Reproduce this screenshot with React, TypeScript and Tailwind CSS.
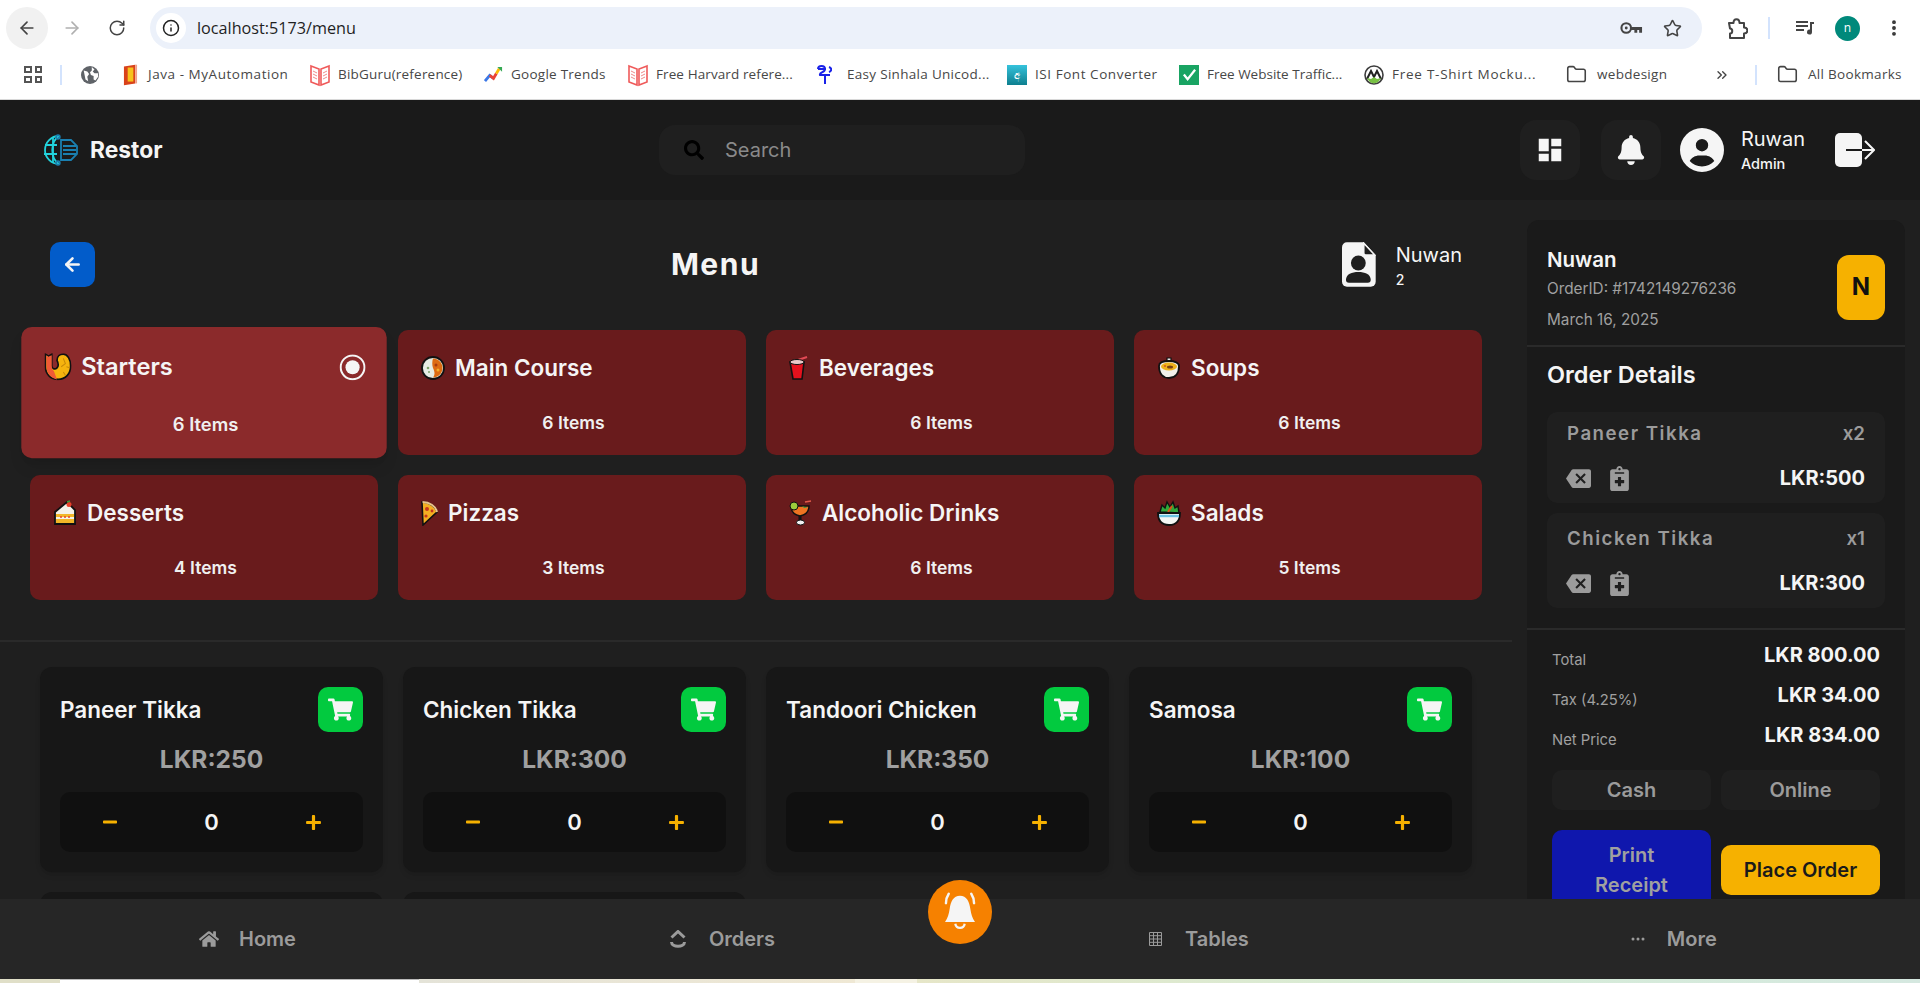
import React from "react";
import { ArrowLeft, ArrowRight, RotateCw, Info, Star, EllipsisVertical, Folder, ChevronsRight } from "lucide-react";
import { FaBell, FaSearch, FaShoppingCart, FaHome, FaMinus, FaPlus, FaNotesMedical } from "react-icons/fa";
import { FaCircleUser } from "react-icons/fa6";
import { MdDashboard, MdBackspace } from "react-icons/md";
import { BsThreeDots } from "react-icons/bs";

const Book = () => (
  <svg viewBox="0 0 20 24" className="w-[20px] h-[24px]">
    <path d="M1 3l8 3v16l-8-3zM19 3l-8 3v16l8-3z" fill="#fff" stroke="#ef5a5a" strokeWidth="1.6" />
    <path d="M3 8l4 2M3 11l4 2M3 14l4 2M17 8l-4 2M17 11l-4 2M17 14l-4 2" stroke="#ef8a8a" strokeWidth="1" />
  </svg>
);
const Bookmarks: { label: string; w: string; icon: React.ReactNode; gap: string }[] = [
  { label: "Java - MyAutomation", w: "w-[140px] tracking-[0.55px]", gap: "gap-[10px]", icon: <svg viewBox="0 0 16 24" className="w-[15px] h-[24px]"><path d="M1 3l12-2v20l-12 2z" fill="#d9421a" /><rect x="5" y="4" width="6" height="15" fill="#f6c21c" /><path d="M13 1h2v20h-2z" fill="#f0a08a" /></svg> },
  { label: "BibGuru(reference)", w: "w-[124px] tracking-[0.2px]", gap: "gap-[8px]", icon: <Book /> },
  { label: "Google Trends", w: "w-[95px] tracking-[0.25px]", gap: "gap-[8px]", icon: <svg viewBox="0 0 20 20" className="w-[19px] h-[19px]"><path d="M1 17l5-6 4 3" stroke="#3b78e7" strokeWidth="3" fill="none" /><path d="M6 11l4 3 3-5" stroke="#ea4335" strokeWidth="3" fill="none" /><path d="M13 9l3-5" stroke="#fbbc04" strokeWidth="3" fill="none" /><path d="M14 2h5v5z" fill="#34a853" /></svg> },
  { label: "Free Harvard refere...", w: "w-[138px] tracking-[0.1px]", gap: "gap-[8px]", icon: <Book /> },
  { label: "Easy Sinhala Unicod...", w: "w-[142px] tracking-[0.3px]", gap: "gap-[11px]", icon: <svg viewBox="0 0 16 22" className="w-[16px] h-[22px]"><path d="M2 5h8M2 5c0-4 7-4 7 0s-6 3-5 6h10M9 11v9M13 3c3 1 3 4 0 5" stroke="#1a22e8" strokeWidth="2" fill="none" /></svg> },
  { label: "ISI Font Converter", w: "w-[118px] tracking-[0.55px]", gap: "gap-[8px]", icon: <div className="w-[20px] h-[20px] bg-gradient-to-b from-[#35c3dc] to-[#0d7f8f] flex items-center justify-center text-[10px] text-white font-['Noto_Sans',sans-serif] leading-none">අ</div> },
  { label: "Free Website Traffic...", w: "w-[139px]", gap: "gap-[8px]", icon: <div className="w-[20px] h-[20px] bg-[#19a463] flex items-center justify-center"><svg viewBox="0 0 16 16" className="w-[15px] h-[15px]"><path d="M2 8l4 5 8-10" stroke="#fff" strokeWidth="2.4" fill="none" /></svg></div> },
  { label: "Free T-Shirt Mocku...", w: "w-[136px] tracking-[0.75px]", gap: "gap-[8px]", icon: <svg viewBox="0 0 20 20" className="w-[20px] h-[20px]"><circle cx="10" cy="10" r="9" fill="#fff" stroke="#3d3d3d" strokeWidth="1.6" /><path d="M3 14l4-8 3 6 3-6 4 8" stroke="#222" strokeWidth="2" fill="none" /><path d="M3 13c3 7 11 7 14 0l-4 1-3-2-3 2z" fill="#77c043" /></svg> },
];

const Outline = "#111";
const Emojis: Record<string, { w: string; node: React.ReactNode }> = {
  Starters: { w: "w-[24px]", node: <svg viewBox="0 0 26 26" className="w-[26px] h-[26px] shrink-0"><path d="M1 1l3 2 3-2v11c0 3 3 4 5 2s1-5 0-7c0-4 3-6 6-6 4 0 7 5 7 11 0 8-5 13-12 13S1 20 1 13z" fill="#f6b40e" stroke={Outline} strokeWidth="1.6" /><path d="M1.800 2l2.200 1.500 3-1.500v10c0 3 1 4 2 5l3 8c-6-1-10-6-10-12z" fill="#ef5a36" /><path d="M18 5l2 5-4 3M21 13l3 1M18 18l2 3" stroke="#c98a08" strokeWidth="1" fill="none" /></svg> },
  "Main Course": { w: "w-[24px]", node: <svg viewBox="0 0 24 24" className="w-[24px] h-[24px]"><circle cx="12" cy="12" r="11" fill="#e6ece4" stroke={Outline} strokeWidth="1.800" /><path d="M12 2.500c5 0 9.500 4 9.500 9.500s-4.500 9.500-9.500 9.500c2-3 2-5 0-9.500-1-3-1-6.500 0-9.500z" fill="#dd6b12" /><circle cx="15" cy="9" r="1.500" fill="#a83b0c" /><circle cx="17" cy="14" r="1.500" fill="#f2b02a" /><circle cx="7" cy="12" r="1.300" fill="#7ea36b" /><circle cx="8" cy="16" r="1" fill="#7ea36b" /></svg> },
  Beverages: { w: "w-[20px]", node: <svg viewBox="0 0 20 26" className="w-[20px] h-[26px]"><path d="M9 5L18 2" stroke="#e24a55" strokeWidth="2" /><path d="M1 7h14l-2 17H4z" fill="#e5111d" stroke={Outline} strokeWidth="1.600" /><ellipse cx="8" cy="7" rx="7" ry="2.500" fill="#e9c9c9" stroke={Outline} strokeWidth="1" /></svg> },
  Soups: { w: "w-[24px]", node: <svg viewBox="0 0 24 24" className="w-[24px] h-[24px]"><path d="M10 2h4v3h-4z" fill="#e8e8e8" stroke={Outline} strokeWidth="1.200" /><path d="M2 10c0-3 4-5 10-5s10 2 10 5c0 8-4 12-10 12S2 18 2 10z" fill="#f1f0ea" stroke={Outline} strokeWidth="1.800" /><ellipse cx="12" cy="10.500" rx="8" ry="4" fill="#eeb21c" /><ellipse cx="13" cy="11" rx="3" ry="1.500" fill="#7a4215" /><circle cx="8" cy="10" r="1" fill="#d9541a" /></svg> },
  Desserts: { w: "w-[24px]", node: <svg viewBox="0 0 24 26" className="w-[24px] h-[26px]"><path d="M2 12L14 2l8 8v14H2z" fill="#f4f1e8" stroke={Outline} strokeWidth="1.800" /><circle cx="16" cy="4.500" r="2.500" fill="#e8402a" /><path d="M14 2l3-1" stroke="#3a9a3a" strokeWidth="1.500" /><rect x="3" y="14" width="18" height="3" fill="#f2b628" /><rect x="3" y="19" width="18" height="4" fill="#f2b628" /><circle cx="8" cy="17" r="1" fill="#e8402a" /><circle cx="12" cy="17" r="1" fill="#e8402a" /><circle cx="16" cy="17" r="1" fill="#e8402a" /></svg> },
  Pizzas: { w: "w-[17px]", node: <svg viewBox="0 0 17 26" className="w-[17px] h-[26px]"><path d="M1 2c7 0 13 4 15 10L2 25z" fill="#f4ae22" stroke={Outline} strokeWidth="1.600" /><path d="M1.500 2c7 0 13 4 14.500 10" stroke="#e8c58c" strokeWidth="2" fill="none" /><circle cx="6" cy="9" r="2" fill="#c7361d" /><circle cx="11" cy="11" r="1.400" fill="#c7361d" /><circle cx="5" cy="16" r="1.600" fill="#c7361d" /></svg> },
  "Alcoholic Drinks": { w: "w-[23px]", node: <svg viewBox="0 0 23 26" className="w-[23px] h-[26px]"><path d="M2 6h18c0 6-4 9-9 10-5-1-9-4-9-10z" fill="#ee7422" stroke={Outline} strokeWidth="1.500" /><circle cx="5" cy="6" r="4" fill="#9ccc3c" stroke={Outline} strokeWidth="1" /><path d="M11 4l4 4h4l-6-2z" fill="#3c9c3c" /><path d="M11 16v6" stroke="#111" strokeWidth="3" /><ellipse cx="11.500" cy="22.500" rx="4" ry="2.500" fill="#f2f2f2" stroke={Outline} strokeWidth="1" /><path d="M16 2l6-1" stroke="#e25a4a" strokeWidth="1.500" /></svg> },
  Salads: { w: "w-[24px]", node: <svg viewBox="0 0 24 26" className="w-[24px] h-[26px]"><path d="M3 12L5 5l3 3 2-6 3 5 3-5 2 6 3-2 1 7z" fill="#2fa83a" stroke={Outline} strokeWidth="1.400" /><path d="M11 12l4-6" stroke="#d9541a" strokeWidth="2" /><path d="M1 13h22c0 7-3 12-11 12S1 20 1 13z" fill="#f4f6f4" stroke={Outline} strokeWidth="1.800" /><path d="M2 16h20" stroke="#6cc4e4" strokeWidth="2.400" /></svg> },
};

const cats = [
  { n: "Starters", c: "6 Items", active: true },
  { n: "Main Course", c: "6 Items" },
  { n: "Beverages", c: "6 Items" },
  { n: "Soups", c: "6 Items" },
  { n: "Desserts", c: "4 Items" },
  { n: "Pizzas", c: "3 Items" },
  { n: "Alcoholic Drinks", c: "6 Items" },
  { n: "Salads", c: "5 Items" },
];
const products = [
  { n: "Paneer Tikka", p: "LKR:250" },
  { n: "Chicken Tikka", p: "LKR:300" },
  { n: "Tandoori Chicken", p: "LKR:350" },
  { n: "Samosa", p: "LKR:100" },
];

function BrowserChrome() {
  return (
    <div className="bg-white h-[100px] flex flex-col border-b border-[#d8d8d8] shrink-0 text-[#3c4043] font-['Open_Sans',sans-serif]">
      <div className="h-[50px] flex items-center pt-[6px] pl-[6px]">
        <div className="w-[42px] h-[42px] rounded-full bg-[#f1f1f1] flex items-center justify-center"><ArrowLeft size={20} strokeWidth={2} color="#444" /></div>
        <div className="w-[48px] flex justify-center"><ArrowRight size={20} color="#b0b0b0" strokeWidth={2} /></div>
        <div className="w-[42px] flex justify-center"><RotateCw size={18} color="#444" strokeWidth={2} /></div>
        <div className="ml-[12px] w-[1552px] h-[42px] rounded-full bg-[#ecf1fa] flex items-center pl-[6px] pr-[20px]">
          <div className="w-[30px] h-[30px] rounded-full bg-white flex items-center justify-center"><Info size={18} color="#222" strokeWidth={2} /></div>
          <div className="ml-[11px] mt-[1px] text-[16.200px] text-[#1f1f1f]">localhost:5173/menu</div>
          <div className="ml-auto flex items-center gap-[20px]">
            <svg viewBox="0 0 24 14" className="w-[23px] h-[14px]"><circle cx="6.500" cy="7" r="5" fill="none" stroke="#444" strokeWidth="2.200" /><circle cx="6.500" cy="7" r="1.500" fill="#444" /><path d="M11 6h12v6h-3V9h-2v3h-3V9h-4z" fill="#444" /></svg>
            <Star size={19} color="#444" strokeWidth={2} />
          </div>
        </div>
        <div className="ml-[24px] flex items-center">
          <svg viewBox="0 0 22 22" className="w-[22px] h-[22px]"><path d="M3 6h4.500c0-5 6-5 6 0H18v4.500c4.500 0 4.500 6 0 6V21H4v-4.500c3 0 3-5 0-5z" fill="none" stroke="#444" strokeWidth="2" strokeLinejoin="round" /></svg>
          <div className="ml-[20px] w-[2px] h-[22px] bg-[#d3e3fd]" />
          <svg viewBox="0 0 20 16" className="ml-[25px] w-[20px] h-[16px]"><path d="M1 2h12M1 6h12M1 10h8" stroke="#444" strokeWidth="2" /><path d="M15 2h4v2h-2v8a2.500 2.500 0 1 1-2-2.400z" fill="#444" /></svg>
          <div className="ml-[20px] w-[25px] h-[25px] rounded-full bg-[#00897b] text-white text-[12px] flex items-center justify-center">n</div>
          <EllipsisVertical size={20} color="#333" strokeWidth={2.600} className="ml-[24px]" />
        </div>
      </div>
      <div className="h-[49px] flex items-center pl-[24px] text-[13.500px] text-[#474747] whitespace-nowrap">
        <div className="grid grid-cols-2 gap-[3px] w-[18px]">
          <div className="h-[7px] border-2 border-[#555]" /><div className="h-[7px] border-2 border-[#555]" /><div className="h-[7px] border-2 border-[#555]" /><div className="h-[7px] border-2 border-[#555]" />
        </div>
        <div className="ml-[18px] w-[2px] h-[20px] bg-[#d3e3fd]" />
        <svg viewBox="0 0 20 20" className="ml-[19px] w-[18px] h-[18px]"><circle cx="10" cy="10" r="10" fill="#5f6368" /><path d="M3 5l4 1 2 3-2 3 1 5-3-2-1-5zM12 1l3 3-2 2 2 2 4 0 0 4-3 4-2-1 0-4-3-1-1-3 2-2z" fill="#fff" /></svg>
        <div className="ml-[24px] flex items-center gap-[22px]">
          {Bookmarks.map((b, i) => (
            <div key={b.label} className={`flex items-center ${b.gap}`}>
              {b.icon}
              <span className={`${b.w} block ${i === 4 ? "ml-[4px] mr-[-4px]" : ""} ${i === 5 ? "mr-[4px]" : ""} ${i === 6 ? "mr-[-4px]" : ""}`}>{b.label}</span>
            </div>
          ))}
        </div>
        <Folder size={21} color="#444" strokeWidth={1.800} className="ml-[38px]" />
        <span className="ml-[10px] w-[72px] tracking-[0.3px]">webdesign</span>
        <ChevronsRight size={16} color="#444" strokeWidth={2} className="ml-[45px]" />
        <div className="ml-[25px] w-[2px] h-[20px] bg-[#d3e3fd]" />
        <Folder size={21} color="#444" strokeWidth={1.800} className="ml-[20px]" />
        <span className="ml-[10px] tracking-[0.3px]">All Bookmarks</span>
      </div>
    </div>
  );
}

function Header() {
  return (
    <header className="h-[100px] shrink-0 bg-[#1a1a1a] flex items-center pl-[42px] pr-[45px] relative">
      <svg viewBox="0 0 36 32" className="w-[36px] h-[32px]">
        <g fill="none" stroke="#22d3dc" strokeWidth="1.800">
          <path d="M17 2A14 14 0 1 0 17 30" />
          <path d="M17 2C8 8 8 24 17 30" />
          <path d="M3 11h12M2 20h13M11 3v26" />
        </g>
        <g fill="none" stroke="#1a7fb0" strokeWidth="1.800">
          <path d="M19 6h10l6 6v8l-6 6H19z" />
          <path d="M21 12h13M21 16h13M21 20h13" />
          <circle cx="16" cy="3" r="1.800" />
          <circle cx="16" cy="29" r="1.800" />
        </g>
      </svg>
      <div className="ml-[12px] w-[72px] text-[22.800px] font-bold text-[#f5f5f5] font-['Inter',sans-serif]">Restor</div>
      <div className="ml-[497px] w-[366px] h-[50px] rounded-[16px] bg-[#1f1f1f] flex items-center pl-[25px]">
        <FaSearch size={20} color="#000" />
        <span className="ml-[21px] text-[20px] text-[#8a8a8a]">Search</span>
      </div>
      <div className="ml-auto flex items-center">
        <div className="w-[60px] h-[60px] rounded-[16px] bg-[#1f1f1f] flex items-center justify-center"><MdDashboard size={30} color="#f5f5f5" /></div>
        <div className="ml-[21px] w-[60px] h-[60px] rounded-[16px] bg-[#1f1f1f] flex items-center justify-center"><FaBell size={30} color="#f5f5f5" /></div>
        <FaCircleUser size={44} color="#f5f5f5" className="ml-[19px]" />
        <div className="ml-[17px] flex flex-col">
          <span className="text-[20px] leading-[24px] text-[#f5f5f5]">Ruwan</span>
          <span className="mt-[3px] text-[14.500px] leading-[20px] font-medium text-[#f5f5f5]">Admin</span>
        </div>
        <svg viewBox="0 0 40 36" className="ml-[30px] w-[40px] h-[36px]">
          <rect x="0" y="1" width="27" height="34" rx="5" fill="#f5f5f5" />
          <path d="M11 18h27" stroke="#1a1a1a" strokeWidth="2" />
          <path d="M27 18h11" stroke="#f5f5f5" strokeWidth="2" />
          <path d="M30 9l9 9-9 9" stroke="#f5f5f5" strokeWidth="2" fill="none" />
        </svg>
      </div>
    </header>
  );
}

function CategoryCard({ n, c, active }: { n: string; c: string; active?: boolean }) {
  const e = Emojis[n];
  return (
    <div className={`h-[125px] rounded-[10px] pl-[23px] pr-[20px] pt-[24px] pb-[20px] flex flex-col justify-between ${active ? "bg-[#8b2a2b] scale-105 shadow-lg" : "bg-[#691b1c]"}`}>
      <div className="flex items-center h-[28px]">
        <div className={`${e.w} flex justify-center shrink-0`}>{e.node}</div>
        <span className="ml-[10px] text-[22.500px] leading-[28px] font-semibold text-[#f5f5f5]">{n}</span>
        {active && (
          <svg viewBox="0 0 26 26" className="ml-auto w-[25px] h-[25px]">
            <circle cx="13" cy="13" r="11.800" fill="none" stroke="#f5f5f5" strokeWidth="2" />
            <circle cx="13" cy="13" r="7" fill="#f5f5f5" />
          </svg>
        )}
      </div>
      <div className="text-center text-[17.500px] leading-[24px] font-semibold text-[#f0f0f0]">{c}</div>
    </div>
  );
}

function ProductCard({ n, p }: { n: string; p: string }) {
  return (
    <div className="h-[205px] rounded-[12px] bg-[#171717] p-[20px] shadow-md">
      <div className="h-[45px] flex items-center justify-between">
        <span className="text-[22.500px] font-semibold text-[#f5f5f5]">{n}</span>
        <div className="w-[45px] h-[45px] rounded-[10px] bg-[#02ca3f] flex items-center justify-center"><FaShoppingCart size={25} color="#f5f5f5" /></div>
      </div>
      <div className="mt-[11px] h-[32px] text-center text-[24.500px] leading-[32px] font-bold text-[#a0a0a0]">{p}</div>
      <div className="mt-[17px] h-[60px] rounded-[10px] bg-[#101010] flex items-center justify-between pl-[42px] pr-[41px]">
        <FaMinus size={16} color="#f6b100" />
        <span className="text-[22px] font-semibold text-[#f5f5f5]">0</span>
        <FaPlus size={17} color="#f6b100" />
      </div>
    </div>
  );
}

function OrderItem({ name, qty, price, first }: { name: string; qty: string; price: string; first?: boolean }) {
  return (
    <div className={`rounded-[10px] bg-[#1f1f1f] px-[20px] pb-[13px] ${first ? "pt-[10px]" : "pt-[14px]"}`}>
      <div className="h-[24px] flex items-center justify-between text-[#9b9b9b] font-semibold text-[18.700px]">
        <span className="tracking-[1.500px]">{name}</span>
        <span>{qty}</span>
      </div>
      <div className="mt-[20px] h-[24px] flex items-center">
        <MdBackspace size={25} color="#9b9b9b" className="ml-[-1px]" />
        <FaNotesMedical size={25} color="#9b9b9b" className="ml-[16px]" />
        <span className="ml-auto text-[20px] font-bold text-[#f5f5f5]">{price}</span>
      </div>
    </div>
  );
}

function Sidebar() {
  return (
    <aside className="ml-[15px] mt-[20px] w-[378px] shrink-0 rounded-t-[12px] bg-[#1a1a1a] self-start">
      <div className="pl-[20px] pr-[20px] pt-[28px] pb-[15px] flex items-center justify-between">
        <div>
          <div className="h-[24px] leading-[24px] text-[20.500px] font-semibold text-[#f5f5f5]">Nuwan</div>
          <div className="mt-[7px] h-[20px] leading-[20px] text-[15.300px] text-[#a0a0a0]">OrderID: #1742149276236</div>
          <div className="mt-[11px] h-[20px] leading-[20px] text-[15.300px] text-[#a0a0a0]">March 16, 2025</div>
        </div>
        <div className="w-[48px] h-[65px] mb-[4px] rounded-[12px] bg-[#f6b100] flex items-center justify-center text-[24px] font-bold text-[#111]">N</div>
      </div>
      <div className="h-[2px] bg-[#2a2a2a]" />
      <div className="px-[20px] pt-[14px] pb-[20px]">
        <div className="h-[28px] leading-[28px] text-[23.500px] font-semibold text-[#f5f5f5]">Order Details</div>
        <div className="mt-[23px] flex flex-col gap-[10px]">
          <OrderItem name="Paneer Tikka" qty="x2" price="LKR:500" first />
          <OrderItem name="Chicken Tikka" qty="x1" price="LKR:300" />
        </div>
      </div>
      <div className="h-[2px] bg-[#2a2a2a]" />
      <div className="px-[25px] pt-[11px]">
        {[
          ["Total", "LKR 800.00"],
          ["Tax (4.25%)", "LKR 34.00"],
          ["Net Price", "LKR 834.00"],
        ].map(([l, v]) => (
          <div key={l} className="h-[40px] flex justify-between items-start">
            <span className="mt-[9px] h-[20px] leading-[20px] text-[14.800px] text-[#a0a0a0]">{l}</span>
            <span className="h-[28px] leading-[28px] text-[20px] font-bold text-[#f5f5f5]">{v}</span>
          </div>
        ))}
        <div className="mt-[9px] grid grid-cols-2 gap-[10px]">
          <div className="h-[40px] rounded-[10px] bg-[#1f1f1f] flex items-center justify-center text-[20px] font-semibold text-[#9b9b9b]">Cash</div>
          <div className="h-[40px] rounded-[10px] bg-[#1f1f1f] flex items-center justify-center text-[20px] font-semibold text-[#9b9b9b]">Online</div>
        </div>
        <div className="mt-[20px] grid grid-cols-2 gap-[10px] items-center">
          <div className="h-[80px] rounded-[10px] bg-[#0f17ad] flex items-center justify-center text-center text-[20px] leading-[30px] font-semibold text-[#a0a0a0]">Print<br />Receipt</div>
          <div className="h-[50px] rounded-[10px] bg-[#f6b100] flex items-center justify-center text-[20px] font-semibold text-[#1a1a1a]">Place Order</div>
        </div>
      </div>
    </aside>
  );
}

function Footer() {
  const item = "flex items-center text-[20px] font-semibold text-[#9b9b9b]";
  return (
    <footer className="relative h-[80px] shrink-0 bg-[#262626] flex items-center pl-[199px]">
      <div className={item}><FaHome size={20} color="#9b9b9b" /><span className="ml-[20px]">Home</span></div>
      <div className={`${item} ml-[374px]`}>
        <svg viewBox="0 0 16 18" className="w-[16px] h-[18px]"><path d="M1.500 7.500L8 1.500l6.500 6" stroke="#9b9b9b" strokeWidth="3" fill="none" /><path d="M1.500 12c0 5.500 13 5.500 13 0" stroke="#9b9b9b" strokeWidth="3" fill="none" /></svg>
        <span className="ml-[23px]">Orders</span>
      </div>
      <div className={`${item} ml-[374px]`}>
        <svg viewBox="0 0 13 14" className="w-[13px] h-[14px]"><path d="M.500.500h12v13H.500zM.500 3.700h12M.500 7h12M.500 10.300h12M4.500.500v13M8.500.500v13" stroke="#9b9b9b" strokeWidth="1" fill="none" /></svg>
        <span className="ml-[23px]">Tables</span>
      </div>
      <div className={`${item} ml-[381px]`}><BsThreeDots size={16} color="#9b9b9b" /><span className="ml-[21px]">More</span></div>
      <div className="absolute left-1/2 -translate-x-1/2 -top-[19px] w-[64px] h-[64px] rounded-full bg-[#f68100] flex items-center justify-center">
        <svg viewBox="0 0 40 48" className="w-[38px] h-[45px]">
          <path d="M20 6c7 0 10 6 11 14 1 6 2 10 5 14H4c3-4 4-8 5-14 1-8 4-14 11-14z" fill="#f5f5f5" />
          <path d="M15 36c1 6 9 6 10 0" stroke="#f5f5f5" strokeWidth="2.400" fill="none" />
          <path d="M5 14c0-4 1-7 3-10M35 14c0-4-1-7-3-10" stroke="#f5f5f5" strokeWidth="2.600" fill="none" strokeLinecap="round" />
        </svg>
      </div>
    </footer>
  );
}

export default function App() {
  return (
    <div className="w-[1920px] h-[983px] overflow-hidden flex flex-col font-['Inter',sans-serif]">
      <BrowserChrome />
      <Header />
      <main className="flex-1 min-h-0 flex overflow-hidden bg-[#1f1f1f]">
        <section className="w-[1512px] shrink-0">
          <div className="mt-[42px] h-[45px] px-[50px] flex items-center justify-between">
            <div className="w-[45px] h-[45px] rounded-[10px] bg-[#025cca] flex items-center justify-center"><ArrowLeft size={21} color="#f5f5f5" strokeWidth={3} /></div>
            <h1 className="mr-[6px] text-[30px] font-bold tracking-[1.500px] text-[#f5f5f5]">Menu</h1>
            <div className="flex items-start h-[45px] w-[120px]">
              <svg viewBox="0 0 34 45" className="w-[34px] h-[45px]">
                <path d="M5 0h17l12 13v27a5 5 0 0 1-5 5H5a5 5 0 0 1-5-5V5a5 5 0 0 1 5-5z" fill="#f5f5f5" />
                <path d="M22 1l11 12H24a2 2 0 0 1-2-2z" fill="#1f1f1f" stroke="#f5f5f5" strokeWidth="1.500" />
                <circle cx="16.500" cy="21" r="7.500" fill="#1f1f1f" />
                <path d="M4 38c0-6 6-8 12.500-8S29 32 29 38c0 2-1 3-3 3H7c-2 0-3-1-3-3z" fill="#1f1f1f" />
              </svg>
              <div className="ml-[20px] pt-[1px] flex flex-col">
                <span className="text-[20px] leading-[24px] text-[#f5f5f5]">Nuwan</span>
                <span className="mt-[3px] text-[14px] leading-[20px] font-medium text-[#f5f5f5]">2</span>
              </div>
            </div>
          </div>
          <div className="mt-[43px] px-[30px] grid grid-cols-4 gap-[20px]">
            {cats.map((c) => <CategoryCard key={c.n} {...c} />)}
          </div>
          <div className="mt-[40px] h-[2px] bg-[#2a2a2a]" />
          <div className="pt-[25px] px-[40px] grid grid-cols-4 gap-[20px]">
            {products.map((p) => <ProductCard key={p.n} {...p} />)}
            <div className="h-[205px] rounded-[12px] bg-[#171717]" />
            <div className="h-[205px] rounded-[12px] bg-[#171717]" />
          </div>
        </section>
        <Sidebar />
      </main>
      <Footer />
      <div className="h-[4px] shrink-0 flex">
        <div className="w-[60px] bg-[#e0dfc8]" />
        <div className="w-[359px] bg-white border-t border-[#bbbbbb]" />
        <div className="w-[436px] bg-gradient-to-r from-[#e4e3d8] to-[#efe8d4]" />
        <div className="w-[62px] bg-[#f5f2e4]" />
        <div className="flex-1 bg-gradient-to-r from-[#e6e6c8] via-[#d6ecd6] to-[#d5e8e0]" />
      </div>
    </div>
  );
}
